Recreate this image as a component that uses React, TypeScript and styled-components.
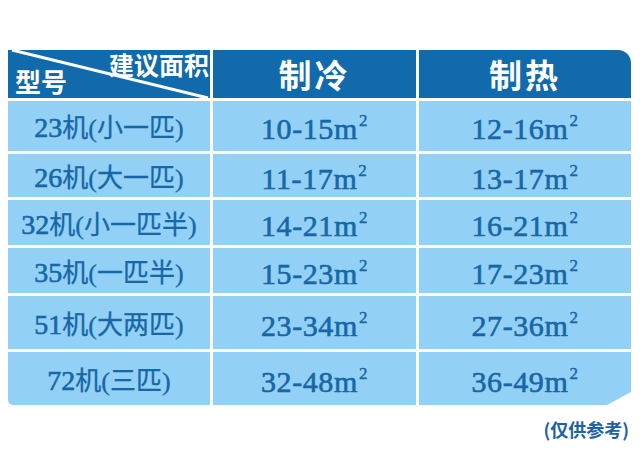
import React from "react";
import styled, { createGlobalStyle } from "styled-components";

const GlobalStyle = createGlobalStyle`
  html, body {
    margin: 0;
    padding: 0;
    background: #ffffff;
  }
  body {
    width: 640px;
    height: 452px;
    overflow: hidden;
    font-family: "Noto Sans CJK SC", sans-serif;
  }
`;

const HEAD = "#116aab";
const LIGHT = "#93d0f5";
const INK = "#1667a7";

const Page = styled.div`
  width: 640px;
  padding: 50px 0 0 8px;
  box-sizing: border-box;
`;

const Table = styled.div`
  display: grid;
  grid-template-columns: 202px 203px 212px;
  grid-template-rows: 48px 50px 43px 45px 45px 53px 53px;
  column-gap: 3px;
  row-gap: 3px;
  width: 623px;
`;

type Corner = "tr" | "bl" | "br" | undefined;

const cornerStyle = (c: Corner) => {
  if (c === "tr") return "border-top-right-radius: 13px;";
  if (c === "bl") return "border-bottom-left-radius: 5px;";
  if (c === "br")
    return "clip-path: polygon(0 0, 100% 0, 100% calc(100% - 13px), calc(100% - 24px) 100%, 0 100%);";
  return "";
};

const HeadCell = styled.div<{ $corner?: Corner }>`
  background: ${HEAD};
  color: #ffffff;
  display: flex;
  align-items: center;
  justify-content: center;
  font-family: "Noto Sans CJK SC", sans-serif;
  font-weight: 700;
  font-size: 33px;
  letter-spacing: 3px;
  line-height: 1;
  ${(p) => cornerStyle(p.$corner)}
`;

const CornerCell = styled.div`
  position: relative;
  background: ${HEAD};
  color: #ffffff;
  display: grid;
  padding: 3px 1px 6px 7px;
  font-family: "Noto Sans CJK SC", sans-serif;
  font-weight: 700;
  line-height: 22px;
`;

const Diagonal = styled.svg`
  position: absolute;
  inset: 0;
  width: 100%;
  height: 100%;
`;

const CornerLabel = styled.span<{ $at: "top" | "bottom" }>`
  position: relative;
  grid-area: 1 / 1;
  font-size: ${(p) => (p.$at === "top" ? "25px" : "26px")};
  align-self: ${(p) => (p.$at === "top" ? "start" : "end")};
  justify-self: ${(p) => (p.$at === "top" ? "end" : "start")};
`;

const BodyCell = styled.div<{ $corner?: Corner }>`
  background: ${LIGHT};
  color: ${INK};
  display: flex;
  align-items: center;
  justify-content: center;
  font-family: "Liberation Serif", "Noto Sans CJK SC", serif;
  font-weight: 400;
  line-height: 1;
  white-space: nowrap;
  -webkit-text-stroke: 0.6px ${INK};
  ${(p) => cornerStyle(p.$corner)}
`;

const Model = styled.span`
  padding-top: 4px;
`;

const ModelNo = styled.span`
  font-size: 28px;
`;

const ModelName = styled.span`
  font-size: 26px;
  -webkit-text-stroke: 0.3px ${INK};
`;

const Area = styled.span`
  font-size: 30px;
  letter-spacing: 0.6px;
  padding-top: 6px;
`;

const Sup = styled.sup`
  font-size: 17px;
  line-height: 0;
  vertical-align: 13px;
  margin-left: 1px;
  -webkit-text-stroke: 0.4px ${INK};
`;

const NoteRow = styled.div`
  display: flex;
  justify-content: flex-end;
  padding: 13px 11px 0 0;
`;

const Note = styled.span`
  color: #1e62a3;
  font-family: "Noto Sans CJK SC", sans-serif;
  font-weight: 700;
  font-size: 18px;
  line-height: 22px;
`;

const rows = [
  { no: "23", name: "机(小一匹)", cool: "10-15", heat: "12-16" },
  { no: "26", name: "机(大一匹)", cool: "11-17", heat: "13-17" },
  { no: "32", name: "机(小一匹半)", cool: "14-21", heat: "16-21" },
  { no: "35", name: "机(一匹半)", cool: "15-23", heat: "17-23" },
  { no: "51", name: "机(大两匹)", cool: "23-34", heat: "27-36" },
  { no: "72", name: "机(三匹)", cool: "32-48", heat: "36-49" },
];

const AreaValue = ({ value }: { value: string }) => (
  <Area>
    {value}m<Sup>2</Sup>
  </Area>
);

export default function App() {
  return (
    <>
      <GlobalStyle />
      <Page>
        <Table>
          <CornerCell>
            <Diagonal viewBox="0 0 202 48" preserveAspectRatio="none">
              <line x1="4" y1="0" x2="200" y2="48" stroke="#ffffff" strokeWidth="3" />
            </Diagonal>
            <CornerLabel $at="top">建议面积</CornerLabel>
            <CornerLabel $at="bottom">型号</CornerLabel>
          </CornerCell>
          <HeadCell>制冷</HeadCell>
          <HeadCell $corner="tr">制热</HeadCell>
          {rows.map((r, i) => {
            const last = i === rows.length - 1;
            return (
              <React.Fragment key={r.no}>
                <BodyCell $corner={last ? "bl" : undefined}>
                  <Model>
                    <ModelNo>{r.no}</ModelNo>
                    <ModelName>{r.name}</ModelName>
                  </Model>
                </BodyCell>
                <BodyCell>
                  <AreaValue value={r.cool} />
                </BodyCell>
                <BodyCell $corner={last ? "br" : undefined}>
                  <AreaValue value={r.heat} />
                </BodyCell>
              </React.Fragment>
            );
          })}
        </Table>
        <NoteRow>
          <Note>(仅供参考)</Note>
        </NoteRow>
      </Page>
    </>
  );
}
